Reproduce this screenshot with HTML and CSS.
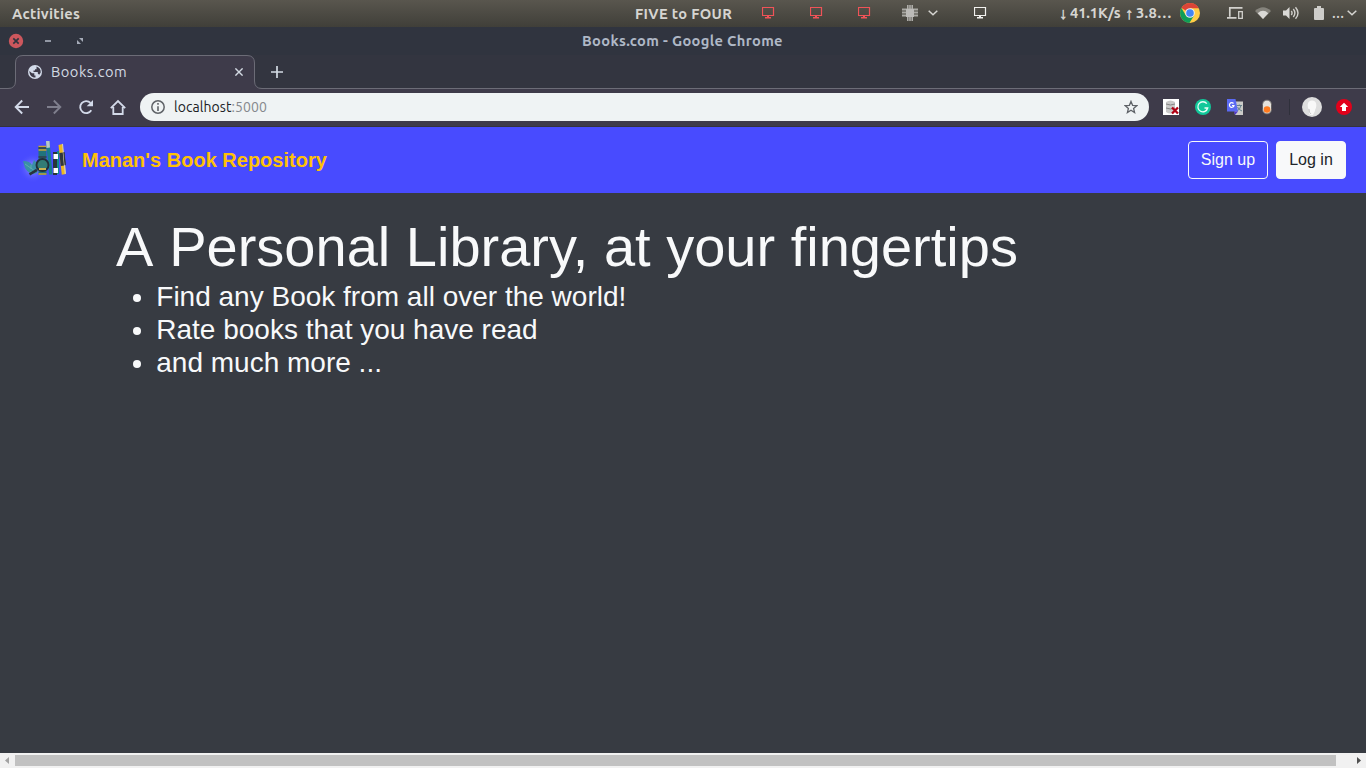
FILE: index.html
```html
<!DOCTYPE html>
<html lang="en">
<head>
<meta charset="utf-8">
<title>Books.com</title>
<link rel="stylesheet" href="styles.css">
</head>
<body>
<svg class="defs" width="0" height="0">
  <symbol id="monitor" viewBox="0 0 13 13"><path d="M.5 1.500h11v8H.5z" fill="none" stroke="currentColor" stroke-width="1.200"/><path d="M5 10h2v1h2v1.500H3V11h2z" fill="currentColor"/></symbol>
  <symbol id="chevron" viewBox="0 0 10 6"><path d="M.7.7 5 4.8 9.3.7" fill="none" stroke="currentColor" stroke-width="1.5"/></symbol>
</svg>
<div class="desktop">
  <header class="panel">
    <span class="activities">Activities</span>
    <span class="clock">FIVE to FOUR</span>
    <div class="workspaces">
      <svg class="screen red"><use href="#monitor"/></svg>
      <svg class="screen red"><use href="#monitor"/></svg>
      <svg class="screen red"><use href="#monitor"/></svg>
    </div>
    <svg class="chip" viewBox="0 0 16 16"><path d="M0 4.500h16M0 7.500h16M0 10.500h16" stroke="#aaa9a4" stroke-width="2"/><path d="M5.800 0v16M8 0v16M10.200 0v16" stroke="#b4b3af" stroke-width="1.500"/><path d="M4 4h8v8H4z" fill="#bcbbb8"/></svg>
    <svg class="chevron first"><use href="#chevron"/></svg>
    <svg class="screen white"><use href="#monitor"/></svg>
    <div class="net"><span>↓</span><span class="down">41.1K/s</span><span>↑</span><span class="up">3.8…</span></div>
    <svg class="chrome" viewBox="0 0 20 20"><circle cx="10" cy="10" r="10" fill="#ffcd46"/><path d="M10 10 1.400 5A10 10 0 0 1 18.800 5.200H10z" fill="#db4437"/><path d="M1.400 5A10 10 0 0 0 9.400 20l4.700-7.500L10 10l-4.100 2.400z" fill="#0f9d58"/><circle cx="10" cy="10" r="4.800" fill="#eee"/><circle cx="10" cy="10" r="3.800" fill="#4285f4"/></svg>
    <svg class="devices" viewBox="0 0 17 12"><path d="M15.500.8H2.800v9M0 10.800h9.500" fill="none" stroke="#d2d1cd" stroke-width="1.700"/><path d="M11.700 4.600h3.600v6.700h-3.600z" fill="none" stroke="#d2d1cd" stroke-width="1.300"/></svg>
    <svg class="wifi" viewBox="0 0 16 12"><path d="M0 4Q8-3.500 16 4L8 12z" fill="#85837c"/><path d="M2.700 6.200Q8 1.300 13.300 6.200L8 12z" fill="#dad9d6"/></svg>
    <svg class="volume" viewBox="0 0 17 14"><path d="M0 4.500h3L6.500 1v12L3 9.500H0z" fill="#dad9d6"/><path d="M8.300 5q1.500 2 0 4M10.300 3q3.200 4 0 8M12.500 1.200q5 5.800 0 11.600" fill="none" stroke="#d2d1cd" stroke-width="1.400"/></svg>
    <svg class="battery" viewBox="0 0 10 14"><path d="M3 0h4v2h2q1 0 1 1v10q0 1-1 1H1q-1 0-1-1V3q0-1 1-1h2z" fill="#cecdca"/></svg>
    <span class="more">…</span>
    <svg class="chevron"><use href="#chevron"/></svg>
  </header>

  <div class="titlebar">
    <svg class="win-buttons" viewBox="0 0 90 28"><circle cx="16" cy="14" r="7.200" fill="#cc575d"/><path d="m13.300 11.300 5.400 5.400m0-5.400-5.400 5.400" stroke="#2f343f" stroke-width="1.700"/><path d="M45 14h6" stroke="#a5abb8" stroke-width="1.700"/><path d="M79 11h4v4zM77 13v4h4z" fill="#a5abb8"/></svg>
    <span class="win-title">Books.com - Google Chrome</span>
  </div>

  <div class="tabstrip">
    <svg class="tab-shape" viewBox="0 0 270 34"><path d="M0 33.500h8q7.500 0 7.500-7.500V8q0-7.500 7.500-7.500h224q7.500 0 7.500 7.500v18q0 7.500 7.500 7.500h8V35H0z" fill="#3e3b4a"/><path d="M0 33.500h8q7.500 0 7.500-7.500V8q0-7.500 7.500-7.500h224q7.500 0 7.500 7.500v18q0 7.500 7.500 7.500h8" fill="none" stroke="#6c6c77"/></svg>
    <div class="tab">
      <svg class="globe" viewBox="0 0 14 14"><circle cx="7" cy="7" r="7" fill="#d3dae9"/><path d="M1.400 6 4 8.200h2.300v2.300h1.200v2C4 12.800 1.200 10 1.400 6zM8.500 1.400c3 .8 4.500 3.300 4.200 6l-1.500 2.400-1.400-1.400V7H5.500V5.600H7V4.200h1.500z" fill="#3e3b4a"/></svg>
      <span class="tab-name">Books.com</span>
      <svg class="close" viewBox="0 0 8 8"><path d="m.4.4 7.200 7.200m0-7.200L.4 7.600" stroke="#d3dae3" stroke-width="1.400"/></svg>
    </div>
    <svg class="plus" viewBox="0 0 12 12"><path d="M6 0v12M0 6h12" stroke="#d3dae3" stroke-width="1.700"/></svg>
  </div>

  <div class="toolbar">
    <svg class="navigation" viewBox="0 0 132 36" fill="none" stroke="#d3dae9" stroke-width="1.900"><path d="M29 18H16m6.200-6.500L15.700 18l6.500 6.500"/><path stroke="#7f7f8d" d="M47 18h13m-6.200-6.500 6.500 6.500-6.500 6.500"/><path d="M91.300 21.300a6 6 0 1 1-.8-7.400"/><path d="M93 11v6.300h-6.300z" fill="#d3dae9" stroke="none"/><path d="M110.800 19.200 118 12l7.200 7.200M113.300 18v7h9.400v-7" stroke-width="1.800"/></svg>
    <div class="address">
      <svg class="info" viewBox="0 0 14 14"><circle cx="7" cy="7" r="6.200" fill="none" stroke="#5f6368" stroke-width="1.500"/><path d="M7 6.200V11M7 3v1.800" stroke="#5f6368" stroke-width="1.600"/></svg>
      <span class="url">localhost<span class="port">:5000</span></span>
      <svg class="star" viewBox="0 0 14 14"><path d="m7 1.400 1.600 3.900 4.200.3-3.200 2.800 1 4.200L7 10.300l-3.600 2.300 1-4.200-3.200-2.800 4.200-.3z" fill="none" stroke="#5f6368" stroke-width="1.300"/></svg>
    </div>
    <div class="extensions">
      <svg viewBox="0 0 16 16"><path d="M0 0h16v16H0z" fill="#fff"/><path d="M3 3q4.500-3 9 0v10q-4.500 3-9 0z" fill="#c9c9c9"/><path d="M3 5q4.500 2 9 0M3 9q4.500 2 9 0" fill="none" stroke="#858585"/><path d="m9 8.500 6 6m0-6-6 6" stroke="#b00014" stroke-width="2.300"/></svg>
      <svg viewBox="0 0 16 16"><circle cx="8" cy="8" r="8" fill="#11c89a"/><path d="M11.800 4.700A5 5 0 1 0 12.700 9H9.500m1.500 2.600L12.800 9" fill="none" stroke="#e9fff8" stroke-width="1.300"/></svg>
      <svg viewBox="0 0 16 16"><path d="M6 2.500h10V16H8z" fill="#cbcbc8"/><path d="M9.500 6.500H15m-2.700-1v1m1.700 0q-.8 4-4 5.500m.5-4q1.500 3 4.500 4" fill="none" stroke="#66818c"/><path d="M0 0h8.500l2.500 12.500H0z" fill="#5b6af3"/><path d="M7 12.500h4L8 16z" fill="#5137ca"/><path d="M6.500 4.500A2.300 2.300 0 1 0 7 6.500H5" fill="none" stroke="#fff" stroke-width="1.200"/></svg>
      <svg viewBox="0 0 16 16"><rect x="3.500" y="1" width="9" height="14" rx="4.500" fill="#e5e2dc" stroke="#625f60"/><circle cx="8" cy="10.500" r="3.300" fill="#ff7a1f"/></svg>
    </div>
    <i class="divider"></i>
    <svg class="avatar" viewBox="0 0 20 20"><circle cx="10" cy="10" r="10" fill="#dedede"/><path d="M7 16q1-3-1-5-1.500-7.500 4-7.500t4 7.500q-1 1-1 3l-2 4H8z" fill="#f8f8f8"/><path d="M7 12q0 4 2 5" stroke="#cacaca" fill="none"/></svg>
    <svg class="update" viewBox="0 0 16 16"><circle cx="8" cy="8" r="8" fill="#e2001a"/><path d="m8 3.800 4.200 4.300H10V12H6V8.100H3.800z" fill="#fff"/></svg>
  </div>

  <nav class="navbar">
    <svg class="logo" viewBox="0 0 50 48"><defs><radialGradient id="halo"><stop offset="0" stop-color="#a8a9ff" stop-opacity=".9"/><stop offset="1" stop-color="#484bff" stop-opacity="0"/></radialGradient></defs><ellipse cx="14" cy="27" rx="15" ry="15" fill="url(#halo)"/><path d="M4 20q7 0 9 4l2-5 5 5-2 8q-7 3-12-5z" fill="#3a8fa6"/><path d="m6 23 10 7m-4-6v4m-1 3h4" stroke="#68b5ad" stroke-width=".8"/><path d="M19.500 5h8v29h-8z" fill="#21737c"/><path d="M19.500 5.500h8M19.500 9h8M19.500 29h8M19.500 33h8" stroke="#c9a53b" stroke-width="1.700"/><path d="M19.500 7h8M19.500 16h8" stroke="#343d48" stroke-width="1.500"/><path d="m27 0 3.500-.5 3 34H30z" fill="#187f8a"/><path d="m27 0 3.500-.5.500 7-3.500.5z" fill="#b9c7c7"/><path d="M34 11h4v23h-4z" fill="#29343b"/><path d="M38 10h2v23h-2z" fill="#118a8a"/><path d="M34.500 13h4.500v5h-4.500zM34.500 27h4.500v5h-4.500z" fill="#fff"/><path d="m39.500 4 4-1 3.300 30-4 .8z" fill="#edb720"/><path d="m40.300 12 5-.8 1.500 13-5 .8z" fill="#30373c"/><path d="m43 3 1-.3 3 30-1.300.3z" fill="#d8cfb5"/><path d="m44.300 11.300 1.200-.2 1.300 13-1.300.2z" fill="#30373c"/><circle cx="23.500" cy="24" r="6" fill="#327c75" stroke="#222f39" stroke-width="1.900"/><path d="M20 28h7" stroke="#cab454" stroke-width="2"/><path d="m18 28.800-7.500 4.500" stroke="#29333b" stroke-width="2.700"/></svg>
    <span class="brand">Manan's Book Repository</span>
    <div class="actions"><button class="signup">Sign up</button><button class="login">Log in</button></div>
  </nav>

  <main class="hero">
    <h1><span class="initial">A</span> Personal Library, at your fingertips</h1>
    <ul><li>Find any Book from all over the world!</li><li>Rate books that you have read</li><li>and much more ...</li></ul>
  </main>
  <div class="scrollbar"><svg viewBox="0 0 15 15"><path d="M9 4v7L5 7.500z" fill="#a3a3a3"/></svg><div class="thumb"></div><svg class="right" viewBox="0 0 15 15"><path d="M6 4v7l4-3.500z" fill="#505050"/></svg></div>
</div>
</body>
</html>
```
FILE: styles.css
```css
* { box-sizing: border-box; }
body { margin: 0; overflow: hidden; font-family: Ubuntu, "Noto Sans", sans-serif; }
svg { display: block; flex: none; }
.defs { position: absolute; }
.desktop { width: 1366px; height: 768px; display: flex; flex-direction: column; background: #383b42; }
.desktop > * { flex: none; }
.panel { height: 27px; display: flex; align-items: center; padding-left: 12px; background: linear-gradient(#59564e, #403f39); color: #d6d5d1; font-weight: 700; font-size: 14.67px; line-height: 28px; letter-spacing: .3px; white-space: nowrap; }
.panel span { flex: none; }
.activities { width: 68px; }
.clock { width: 97px; margin-left: 555px; letter-spacing: .34px; }
.workspaces { display: flex; gap: 35px; margin-left: 30px; margin-bottom: 1px; }
.screen { width: 13px; height: 13px; margin-bottom: 1px; }
.red { color: #f05358; }
.white { color: #f2f1ee; margin-left: 36px; margin-bottom: 2px; }
.chip { width: 16px; height: 16px; margin-left: 31px; margin-bottom: 1px; }
.chevron { width: 10px; height: 6px; margin-left: 4px; margin-bottom: 2px; }
.chevron.first { margin-left: 10px; }
.net { width: 112px; margin-left: 73px; display: flex; line-height: 26px; margin-bottom: 2px; }
.net span:nth-child(odd) { width: 10px; font-size: 16px; margin-left: -1px; margin-right: 1px; -webkit-text-stroke: .5px #d6d5d1; }
.down { width: 56px; letter-spacing: -.1px; }
.up { width: 36px; }
.chrome { width: 20px; height: 20px; margin-left: 8px; margin-bottom: 1px; }
.devices { width: 17px; height: 12px; margin-left: 27px; margin-bottom: 1px; }
.wifi { width: 16px; height: 12px; margin-left: 11px; margin-bottom: 1px; }
.volume { width: 17px; height: 14px; margin-left: 12px; margin-bottom: 1px; }
.battery { width: 10px; height: 14px; margin-left: 14px; margin-bottom: 1px; }
.more { width: 11px; margin-left: 8px; font-size: 12px; letter-spacing: -.5px; }
.titlebar { height: 28px; display: flex; align-items: center; background: #30343f; }
.win-buttons { width: 90px; height: 28px; }
.win-title { margin-left: 492px; margin-bottom: 2px; color: #afb8c6; font-size: 14.67px; letter-spacing: .34px; font-weight: 700; white-space: nowrap; }
.tabstrip { height: 34px; display: grid; grid-template-columns: 270px 1fr; align-items: center; background: linear-gradient(#333540 33px, #6c6c77 33px); }
.tab-shape { grid-area: 1 / 1; width: 270px; height: 34px; }
.tab { grid-area: 1 / 1; display: flex; align-items: center; padding-left: 28px; color: #d3dae3; font-size: 14.67px; line-height: 18px; letter-spacing: .48px; }
.globe { width: 14px; height: 14px; }
.tab-name { width: 83px; margin-left: 9px; }
.close { width: 8px; height: 8px; margin-left: 101px; }
.plus { width: 12px; height: 12px; margin-left: 1px; }
.toolbar { height: 38px; display: flex; align-items: center; padding-bottom: 1px; background: #3e3b4a; border-bottom: 1px solid #34333e; }
.navigation { width: 132px; height: 36px; }
.address { width: 1009px; height: 28px; margin-left: 8px; border-radius: 14px; background: #eff3f4; display: flex; align-items: center; padding: 0 11px; font-size: 14px; letter-spacing: .07px; color: #202124; }
.info { width: 14px; height: 14px; }
.url { margin-left: 9px; }
.port { color: #85888c; }
.star { width: 14px; height: 14px; margin-left: auto; }
.extensions { display: flex; gap: 16px; margin-left: 14px; }
.extensions svg { width: 16px; height: 16px; }
.divider { width: 1px; height: 16px; margin-left: 14px; background: #2f303b; }
.avatar { width: 20px; height: 20px; margin-left: 12px; }
.update { width: 16px; height: 16px; margin-left: 14px; }
.navbar { height: 66px; background: #484bff; display: flex; align-items: center; padding: 0 20px 0 19px; font-family: "Liberation Sans", sans-serif; }
.logo { width: 50px; height: 48px; margin-top: 10px; }
.brand { margin-left: 13px; color: #ffc107; font-size: 20px; font-weight: 700; }
.actions { display: flex; gap: 8px; margin-left: auto; }
.actions button { height: 38px; border: 1px solid #f8f9fa; border-radius: 4px; padding: 0; font: 16px/24px "Liberation Sans", sans-serif; }
.signup { width: 80px; color: #f8f9fa; background: transparent; }
.login { width: 70px; color: #212529; background: #f8f9fa; }
.hero { height: 560px; padding: 20px 116px 0; color: #f8f9fa; background: #373b42; font-family: "Liberation Sans", sans-serif; }
.hero h1 { margin: 0; font-size: 56px; line-height: 67px; font-weight: 400; }
.initial { margin-right: .3px; }
.hero ul { margin: 0; padding-left: 40.3px; font-size: 28px; line-height: 33px; }
.scrollbar { height: 15px; background: #f1f1f1; display: flex; align-items: center; }
.scrollbar svg { width: 15px; height: 15px; }
.thumb { width: 1321px; height: 11px; background: #c1c1c1; }
.right { margin-left: auto; }
```
